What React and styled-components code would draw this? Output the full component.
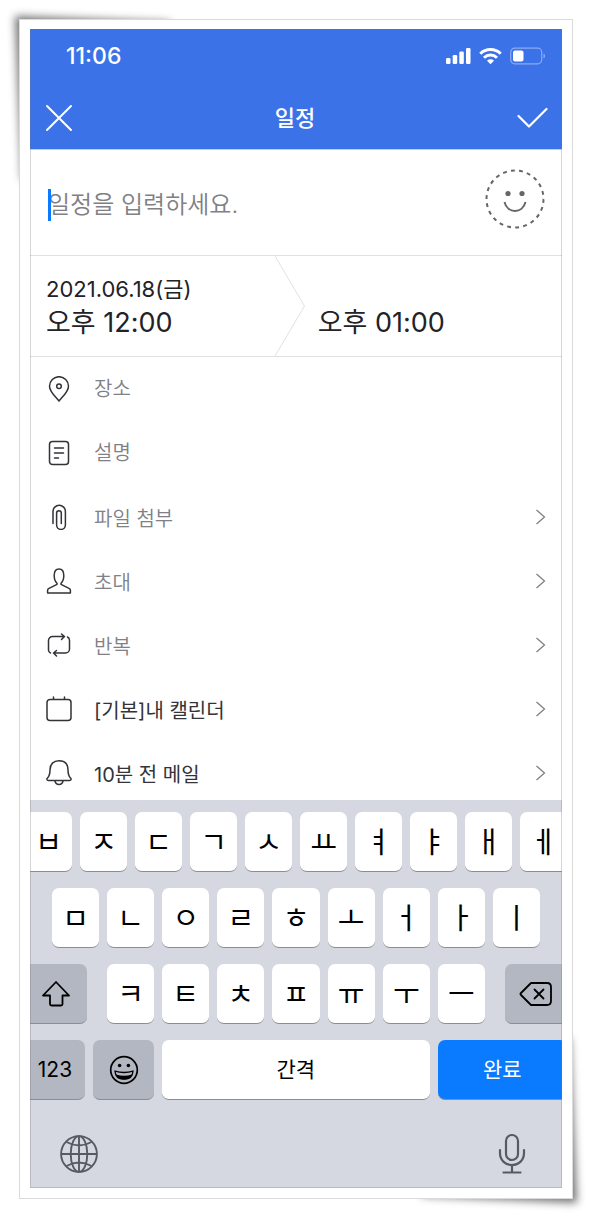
import React from 'react';
import styled, { createGlobalStyle } from "styled-components";

const GlobalStyle = createGlobalStyle`
  * {
    box-sizing: border-box;
  }
  body {
    margin: 0;
    background: white;
    font-family: Inter, "Noto Sans CJK KR", sans-serif;
    color: #222227;
  }
  button, input {
    margin: 0;
    padding: 0;
    border: 0;
    border-radius: 0;
    background: none;
    color: inherit;
    font: inherit;
    text-align: left;
    outline: none;
  }
  svg {
    display: block;
    flex: none;
  }
`;

const Page = styled.div`
  position: relative;
  padding: 19px;
`;

const Frame = styled.div`
  position: relative;
  padding: 9px 10px 10px;
  background: white;
  border: 1px solid #dadada;
`;

const Curl = styled.svg`
  position: absolute;
  ${props => props.$corner === "top" ? "top: 0; left: 0;" : "bottom: 0; right: 0;"}
  path {
    fill: rgba(0, 0, 0, 0.55);
    filter: blur(4px);
  }
`;

const Screen = styled.main`
  position: relative;
  overflow: hidden;
  &::after {
    content: "";
    position: absolute;
    inset: 0;
    border: 1px solid rgba(120, 120, 120, 0.3);
    border-top: 0;
    pointer-events: none;
  }
`;

const Header = styled.header`
  background: #3c72e8;
  border-bottom: 1px solid #c3cbe8;
  color: white;
`;

const StatusBar = styled.div`
  display: flex;
  align-items: center;
  justify-content: space-between;
  height: 54px;
  padding: 0 16px 0 36px;
  font-size: 23px;
  font-weight: 500;
`;

const StatusIcons = styled.div`
  display: flex;
  align-items: center;
  gap: 8px;
`;

const TitleBar = styled.div`
  display: flex;
  align-items: center;
  justify-content: space-between;
  height: 66px;
  padding: 4px 14px 0 15px;
  h1 {
    margin: 0;
    font-size: 22px;
    font-weight: 500;
    line-height: 32px;
  }
`;

const Subject = styled.section`
  display: flex;
  align-items: center;
  height: 106px;
  padding: 0 17px 8px 18px;
  border-bottom: 1px solid #e1e1e1;
`;

const SubjectField = styled.div`
  position: relative;
  flex: 1;
  min-width: 0;
  padding-top: 12px;
  input {
    display: block;
    width: 100%;
    height: 36px;
    font-size: 24px;
    font-weight: 350;
  }
  input::placeholder {
    color: #808086;
    opacity: 1;
  }
`;

const Caret = styled.span`
  position: absolute;
  bottom: 2px;
  left: 0;
  width: 3px;
  height: 32px;
  background: #0a7aff;
`;

const Period = styled.section`
  display: flex;
  height: 101px;
  border-bottom: 1px solid #e1e1e1;
`;

const DateButton = styled.button`
  display: flex;
  flex-direction: column;
  justify-content: flex-end;
  flex: ${props => props.$end ? "1" : "0 0 46%"};
  padding: 0 0 15px ${props => props.$end ? "13px" : "16px"};
`;

const Day = styled.span`
  font-size: 22px;
  line-height: 32px;
`;

const Time = styled.span`
  font-size: 27px;
  line-height: 36px;
`;

const Options = styled.ul`
  display: flex;
  flex-direction: column;
  gap: 10px;
  margin: 0;
  padding: 5px 0 0;
  list-style: none;
`;

const optionRow = `
  display: flex;
  align-items: center;
  gap: 22px;
  width: 100%;
  height: 54px;
  padding: 0 15px 0 16px;
  font-size: 20px;
`;

const OptionLabel = styled.label`
  ${optionRow}
  input {
    flex: 1;
    min-width: 0;
    height: 32px;
    font-weight: 350;
  }
  input::placeholder {
    color: #808086;
    opacity: 1;
  }
`;

const OptionButton = styled.button`
  ${optionRow}
  color: ${props => props.$filled ? "#333338" : "#808086"};
  font-weight: ${props => props.$filled ? 400 : 350};
  span {
    flex: 1;
  }
`;

const Keyboard = styled.section`
  padding-top: 12px;
  background: #d5d8e0;
`;

const KeyRow = styled.div`
  display: flex;
  gap: 8px;
  margin: 0 -5px 16px;
  padding: 0 ${props => props.$inset || 0}px;
`;

const Letters = styled.div`
  display: flex;
  flex: 1;
  gap: 8px;
  margin: 0 12px;
`;

const Key = styled.button`
  display: flex;
  align-items: center;
  justify-content: center;
  flex: ${props => props.$flex || "1 1 0"};
  min-width: 0;
  height: 60px;
  padding-bottom: ${props => props.$tone === "dark" ? 0 : 4}px;
  border-bottom: 1px solid #8b8d92;
  border-radius: 7px;
  background: ${props => props.$tone === "dark" ? "#b3b7c2" : props.$tone === "blue" ? "#0a7aff" : "white"};
  color: ${props => props.$tone === "blue" ? "white" : "black"};
  font-size: ${props => props.$jamo ? 29 : 21}px;
`;

const BottomBar = styled.div`
  display: flex;
  align-items: center;
  justify-content: space-between;
  height: 72px;
  padding: 4px 36px 0 30px;
  color: #555a64;
`;

const Icon = ({ children }) => (
  <svg width="26" height="26" viewBox="0 0 26 26" fill="none" stroke="#333338" strokeWidth="1.5" strokeLinecap="round" strokeLinejoin="round">
    {children}
  </svg>
);

const Arrow = () => (
  <svg width="12" height="16" viewBox="0 0 12 16" fill="none" stroke="#808080" strokeWidth="1.3">
    <path d="M1.5 1 9.5 8 1.5 15" />
  </svg>
);

const options = [
  {
    name: "장소",
    field: true,
    icon: <><path d="M13 25C10.500 21.500 3.500 16 3.500 10.200a9.500 9.500 0 0 1 19 0C22.500 16 15.500 21.500 13 25Z" /><circle cx="13" cy="10.200" r="2.300" /></>,
  },
  {
    name: "설명",
    field: true,
    icon: <><rect x="3.500" y="1.500" width="19" height="23" rx="3" /><path d="M8.500 8h9M8.500 13h9M8.500 18h4" /></>,
  },
  {
    name: "파일 첨부",
    icon: <path d="M7 19.500V7.500a6.200 6.200 0 0 1 12.400 0V21a4.400 4.400 0 0 1-8.800 0V9a2.300 2.300 0 0 1 4.700 0V19.500" />,
  },
  {
    name: "초대",
    icon: <path d="M11 15.200C9 13.500 8.200 11 8.200 7.500 8.200 3.300 10 1 13 1s4.800 2.300 4.800 6.500c0 3.500-.8 6-2.800 7.700v1.100l8 4c1 .5 1.400 1 1.400 2V25H1.600v-2.700c0-1 .4-1.500 1.400-2l8-4Z" />,
  },
  {
    name: "반복",
    icon: <><path d="M4.500 21C3.200 20.400 2.500 19.500 2.500 18V8.500a4 4 0 0 1 4-4H18M15.500 2 18.500 4.500 15.500 7.500M21.500 5c1.300.6 2 1.700 2 3.500V17a4 4 0 0 1-4 4H8M10.500 18.500 7.500 21 10.500 24" /></>,
  },
  {
    name: "[기본]내 캘린더",
    filled: true,
    icon: <><rect x="1" y="3.500" width="24" height="21" rx="3" /><path d="M7.500 3V1M18.500 3V1" /></>,
  },
  {
    name: "10분 전 메일",
    filled: true,
    icon: <><path d="M2.500 20.500c-1.800 0-2-1.500-1-2.500 2-2 2.500-4 2.500-8C4 4 7.500.8 13 .8s9 3.200 9 9.200c0 4 .5 6 2.500 8 1 1 .8 2.500-1 2.500Z" /><path d="M9 21c.5 2.500 2 3.500 4 3.500s3.500-1 4-3.500" /></>,
  },
];

const jamoKeys = letters => letters.split("").map(letter => (
  <Key key={letter} type="button" $jamo>{letter}</Key>
));

const App = () => (
  <Page>
    <GlobalStyle />
    <Curl $corner="top" width="260" height="260" aria-hidden="true">
      <path d="M15 16 170 22 170 40 40 180 22 180Z" />
    </Curl>
    <Curl $corner="bottom" width="260" height="260" aria-hidden="true">
      <path d="M245 245 90 238 90 220 220 80 238 80Z" />
    </Curl>
    <Frame>
      <Screen>
        <Header>
          <StatusBar>
            <time>11:06</time>
            <StatusIcons>
              <svg width="25" height="18" viewBox="0 0 25 18" fill="white">
                <rect x="0" y="11" width="4.500" height="6" rx="1.300" />
                <rect x="6.700" y="8" width="4.500" height="9" rx="1.300" />
                <rect x="13.300" y="4.500" width="4.500" height="12.500" rx="1.300" />
                <rect x="20" y="1" width="4.500" height="16" rx="1.300" />
              </svg>
              <svg width="23" height="18" viewBox="0 0 23 18" fill="none" stroke="white" strokeWidth="3">
                <path d="M1.300 6.700a14.500 14.500 0 0 1 20.400 0" />
                <path d="M5 10.700a9.300 9.300 0 0 1 13 0" />
                <path d="M8 13.700a5 5 0 0 1 7 0L11.500 17.300Z" fill="white" stroke="none" />
              </svg>
              <svg width="36" height="18" viewBox="0 0 36 18">
                <rect x=".7" y="1.200" width="31" height="15.600" rx="4" fill="none" stroke="rgba(255,255,255,.4)" strokeWidth="1.200" />
                <rect x="3" y="3.500" width="10.500" height="11" rx="2" fill="white" />
                <path d="M33.500 6.500c2 .8 2 4.200 0 5Z" fill="rgba(255,255,255,.4)" />
              </svg>
            </StatusIcons>
          </StatusBar>
          <TitleBar>
            <button type="button" aria-label="닫기">
              <svg width="28" height="28" viewBox="0 0 28 28" fill="none" stroke="white" strokeWidth="2" strokeLinecap="round">
                <path d="M2 2 26 26M26 2 2 26" />
              </svg>
            </button>
            <h1>일정</h1>
            <button type="button" aria-label="저장">
              <svg width="31" height="28" viewBox="0 0 31 28" fill="none" stroke="white" strokeWidth="2.200" strokeLinecap="round" strokeLinejoin="round">
                <path d="M1.500 12 12 22.500 29.500 5" />
              </svg>
            </button>
          </TitleBar>
        </Header>

        <Subject>
          <SubjectField>
            <input type="text" aria-label="일정" placeholder="일정을 입력하세요." />
            <Caret />
          </SubjectField>
          <button type="button" aria-label="스티커">
            <svg width="60" height="60" viewBox="0 0 60 60" fill="none" stroke="#666" strokeWidth="2">
              <circle cx="30" cy="30" r="28.500" pathLength="176" strokeDasharray="3.800 4.200" />
              <path d="M19.500 33c3 12 18 12 21 0" />
              <circle cx="23" cy="24.500" r="2.600" fill="#666" stroke="none" />
              <circle cx="37" cy="24.500" r="2.600" fill="#666" stroke="none" />
            </svg>
          </button>
        </Subject>

        <Period>
          <DateButton type="button">
            <Day>2021.06.18(금)</Day>
            <Time>오후 12:00</Time>
          </DateButton>
          <svg width="30" height="100" viewBox="0 0 30 100" fill="none" stroke="#e1e1e1">
            <path d="M0 0 29.500 50 0 100" />
          </svg>
          <DateButton type="button" $end>
            <Time>오후 01:00</Time>
          </DateButton>
        </Period>

        <Options>
          {options.map(option => (
            <li key={option.name}>
              {option.field ? (
                <OptionLabel>
                  <Icon>{option.icon}</Icon>
                  <input type="text" aria-label={option.name} placeholder={option.name} />
                </OptionLabel>
              ) : (
                <OptionButton type="button" $filled={option.filled}>
                  <Icon>{option.icon}</Icon>
                  <span>{option.name}</span>
                  <Arrow />
                </OptionButton>
              )}
            </li>
          ))}
        </Options>

        <Keyboard>
          <KeyRow>{jamoKeys("ㅂㅈㄷㄱㅅㅛㅕㅑㅐㅔ")}</KeyRow>
          <KeyRow $inset={27}>{jamoKeys("ㅁㄴㅇㄹㅎㅗㅓㅏㅣ")}</KeyRow>
          <KeyRow>
            <Key type="button" aria-label="Shift" $tone="dark" $flex="0 0 62px">
              <svg width="30" height="28" viewBox="0 0 30 28" fill="none" stroke="black" strokeWidth="1.800" strokeLinejoin="round">
                <path d="M15 2 28 15.500H21.500V24q0 1.500-1.500 1.500H10.500Q9 25.500 9 24V15.500H2Z" />
              </svg>
            </Key>
            <Letters>{jamoKeys("ㅋㅌㅊㅍㅠㅜㅡ")}</Letters>
            <Key type="button" aria-label="삭제" $tone="dark" $flex="0 0 62px">
              <svg width="34" height="26" viewBox="0 0 34 26" fill="none" stroke="black" strokeWidth="1.800" strokeLinecap="round" strokeLinejoin="round">
                <path d="M12 2H28q4 0 4 4V20q0 4-4 4H12L2 14q-1-1 0-2Z" />
                <path d="M15.500 8.500 24.500 17.500M24.500 8.500 15.500 17.500" />
              </svg>
            </Key>
          </KeyRow>
          <KeyRow>
            <Key type="button" $tone="dark" $flex="0 0 60px">123</Key>
            <Key type="button" aria-label="이모티콘" $tone="dark" $flex="0 0 61px">
              <svg width="30" height="30" viewBox="0 0 30 30" fill="none" stroke="black" strokeWidth="1.700">
                <circle cx="15" cy="15" r="13.300" />
                <circle cx="10.600" cy="10.500" r="1.800" fill="black" stroke="none" />
                <circle cx="19.400" cy="10.500" r="1.800" fill="black" stroke="none" />
                <path d="M6 16.200q9 2.600 18 0-.5 8-9 8t-9-8Z" strokeWidth="1.300" />
                <path d="M7 19.500q8 2.500 16 0-1.500 5-8 5t-8-5Z" fill="black" stroke="none" />
              </svg>
            </Key>
            <Key type="button" $flex="267 1 0">간격</Key>
            <Key type="button" $tone="blue" $flex="129 1 0">완료</Key>
          </KeyRow>
          <BottomBar>
            <button type="button" aria-label="언어">
              <svg width="38" height="38" viewBox="0 0 38 38" fill="none" stroke="currentColor" strokeWidth="1.900">
                <circle cx="19" cy="19" r="17.900" />
                <ellipse cx="19" cy="19" rx="8.300" ry="17.900" />
                <path d="M19 1V37M1 19H37M6.500 7q12.500 7 25 0M6.500 31q12.500-7 25 0" />
              </svg>
            </button>
            <button type="button" aria-label="음성 입력">
              <svg width="28" height="42" viewBox="0 0 28 42" fill="none" stroke="currentColor" strokeWidth="2.200" strokeLinecap="round">
                <rect x="8" y="2" width="12" height="25" rx="6" />
                <path d="M2 17v3c0 7 5 12 12 12s12-5 12-12v-3M14 32v7.500M5.500 39.500h17" />
              </svg>
            </button>
          </BottomBar>
        </Keyboard>
      </Screen>
    </Frame>
  </Page>
);

export default App;
